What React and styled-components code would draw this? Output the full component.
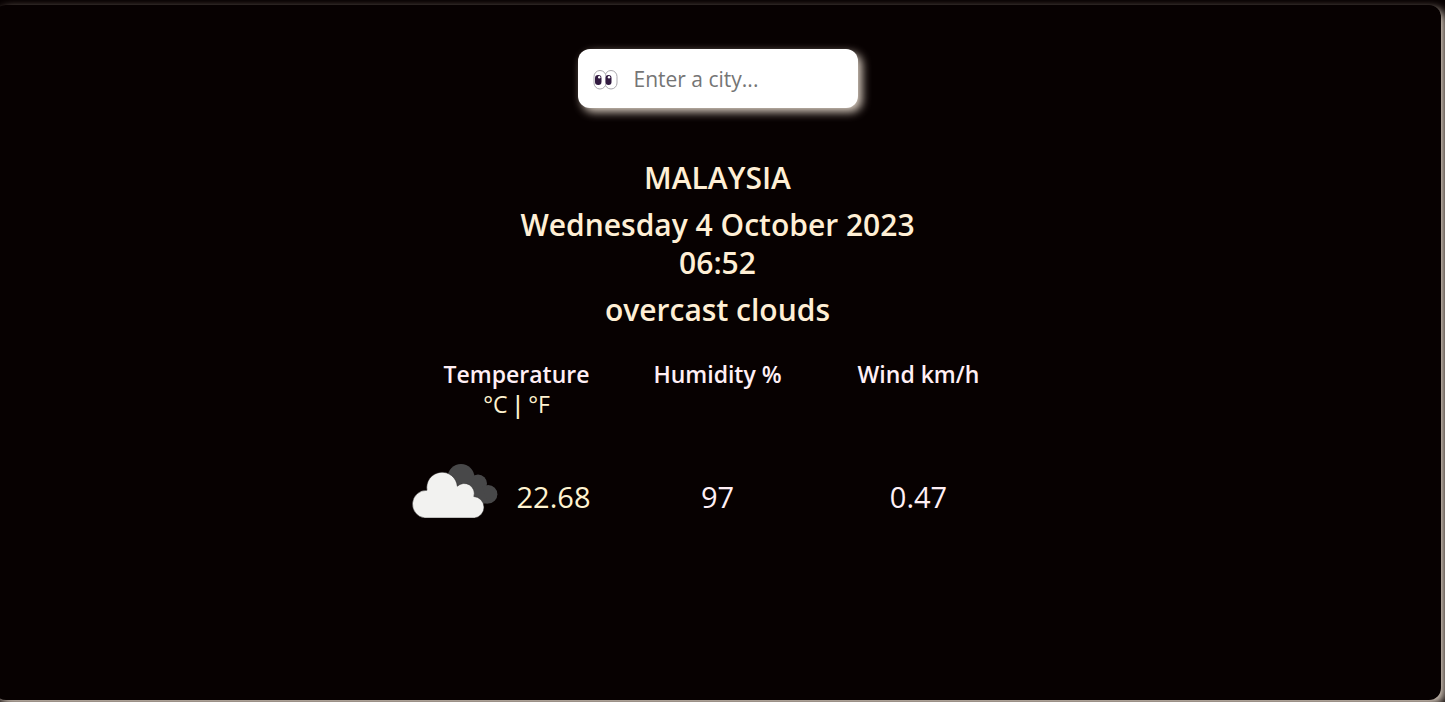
import React, { useState } from "react";
import styled, { createGlobalStyle } from "styled-components";

const GlobalStyle = createGlobalStyle`
  *, *::before, *::after { box-sizing: border-box; }
  body {
    margin: 0;
    background: #070101;
    color: #ffefd5;
    font-family: "Segoe UI", "Open Sans", "Noto Sans", sans-serif;
    overflow: hidden;
  }
`;

const Page = styled.div`
  display: flex;
  min-height: 100vh;
  padding: 5px 4px 2px 0;
`;

const Card = styled.main`
  flex: 1;
  display: flex;
  flex-direction: column;
  align-items: center;
  margin-left: -6px;
  padding: 44px 16px 16px;
  border-radius: 12px;
  background: #070101;
  box-shadow: 4px 4px 10px #dccfc2;
`;

const SearchBox = styled.label`
  display: flex;
  align-items: center;
  gap: 15px;
  width: 280px;
  height: 59px;
  padding: 0 15px;
  border-radius: 12px;
  background: #fff;
  box-shadow: 4px 4px 10px #dccfc2;
`;

const SearchInput = styled.input`
  flex: 1;
  min-width: 0;
  padding: 0;
  border: 0;
  outline: 0;
  background: transparent;
  color: #212529;
  font-family: inherit;
  font-size: 21px;
  &::placeholder { color: #757575; opacity: 1; }
`;

const Summary = styled.section`
  display: flex;
  flex-direction: column;
  gap: 9px;
  margin-top: 51px;
  text-align: center;
`;

const Heading = styled.h2`
  margin: 0;
  font-size: 30px;
  line-height: 38px;
  font-weight: 600;
`;

const Readings = styled.section`
  display: grid;
  grid-template-columns: repeat(3, 201px);
  margin-top: 30px;
  text-align: center;
`;

const Label = styled.h3`
  margin: 0;
  color: #ffeff5;
  font-size: 23px;
  line-height: 30px;
  font-weight: 600;
`;

const Units = styled.div`
  display: flex;
  justify-content: center;
  gap: 4px;
  color: #fff3d0;
  font-size: 23px;
  line-height: 30px;
`;

const Unit = styled.a`
  color: inherit;
  text-decoration: none;
`;

const Divider = styled.span`
  font-weight: 600;
`;

const Reading = styled.div`
  display: flex;
  align-items: center;
  justify-content: center;
  height: 100px;
  margin-top: 27px;
  color: ${(p) => p.$color || "#ffeff5"};
  font-size: 29px;
`;

const TemperatureReading = styled(Reading)`
  gap: 19px;
  padding-right: 33px;
`;

const CloudIcon = styled.svg`
  flex: none;
  margin-bottom: 12px;
`;

const EyesIcon = styled.svg`
  flex: none;
`;

const Eyes = () => (
  <EyesIcon width="26" height="25" viewBox="0 -3 26 25" aria-hidden="true">
    <rect x="12" y="1.5" width="12" height="18.5" rx="6" fill="#fff" stroke="#aaa7ad" />
    <rect x="1" y="1.5" width="12" height="18.5" rx="6" fill="#fff" stroke="#aaa7ad" />
    <rect x="2" y="6" width="6.5" height="10" rx="3.2" fill="#321b41" />
    <rect x="12.5" y="6" width="6" height="10" rx="3" fill="#321b41" />
    <circle cx="6.2" cy="8.3" r="1.2" fill="#fff" />
    <circle cx="16" cy="8.3" r="1.2" fill="#fff" />
  </EyesIcon>
);

const Clouds = () => (
  <CloudIcon width="88" height="56" viewBox="0 0 88 56" role="img" aria-label="overcast clouds">
    <g fill="#484849">
      <circle cx="51" cy="15.5" r="13.5" />
      <circle cx="68" cy="21.5" r="9" />
      <circle cx="78.200" cy="32.3" r="9.2" />
      <path d="M45 15H62L72 24L78 41.5H60Z" />
    </g>
    <path
      d="M14.800 56A13.900 13.900 0 0 1 17 28.300A15.300 15.300 0 1 1 47.300 24.300A10 10 0 0 1 63.800 34.500A10.800 10.800 0 0 1 64.500 56Z"
      fill="#f2f2f0"
      stroke="#2a2829"
      strokeWidth="0.5"
    />
  </CloudIcon>
);

export default function App() {
  const [city, setCity] = useState("");
  return (
    <>
      <GlobalStyle />
      <Page>
        <Card>
          <SearchBox>
            <Eyes />
            <SearchInput
              type="text"
              aria-label="City"
              placeholder="Enter a city..."
              value={city}
              onChange={(e) => setCity(e.target.value)}
            />
          </SearchBox>
          <Summary>
            <Heading>MALAYSIA</Heading>
            <Heading>
              Wednesday 4 October 2023
              <br />
              06:52
            </Heading>
            <Heading>overcast clouds</Heading>
          </Summary>
          <Readings>
            <div>
              <Label>Temperature</Label>
              <Units>
                <Unit href="#celsius">°C</Unit>
                <Divider>|</Divider>
                <Unit href="#fahrenheit">°F</Unit>
              </Units>
            </div>
            <Label>Humidity %</Label>
            <Label>Wind km/h</Label>
            <TemperatureReading $color="#fff3d0">
              <Clouds />
              <span>22.68</span>
            </TemperatureReading>
            <Reading>97</Reading>
            <Reading>0.47</Reading>
          </Readings>
        </Card>
      </Page>
    </>
  );
}
